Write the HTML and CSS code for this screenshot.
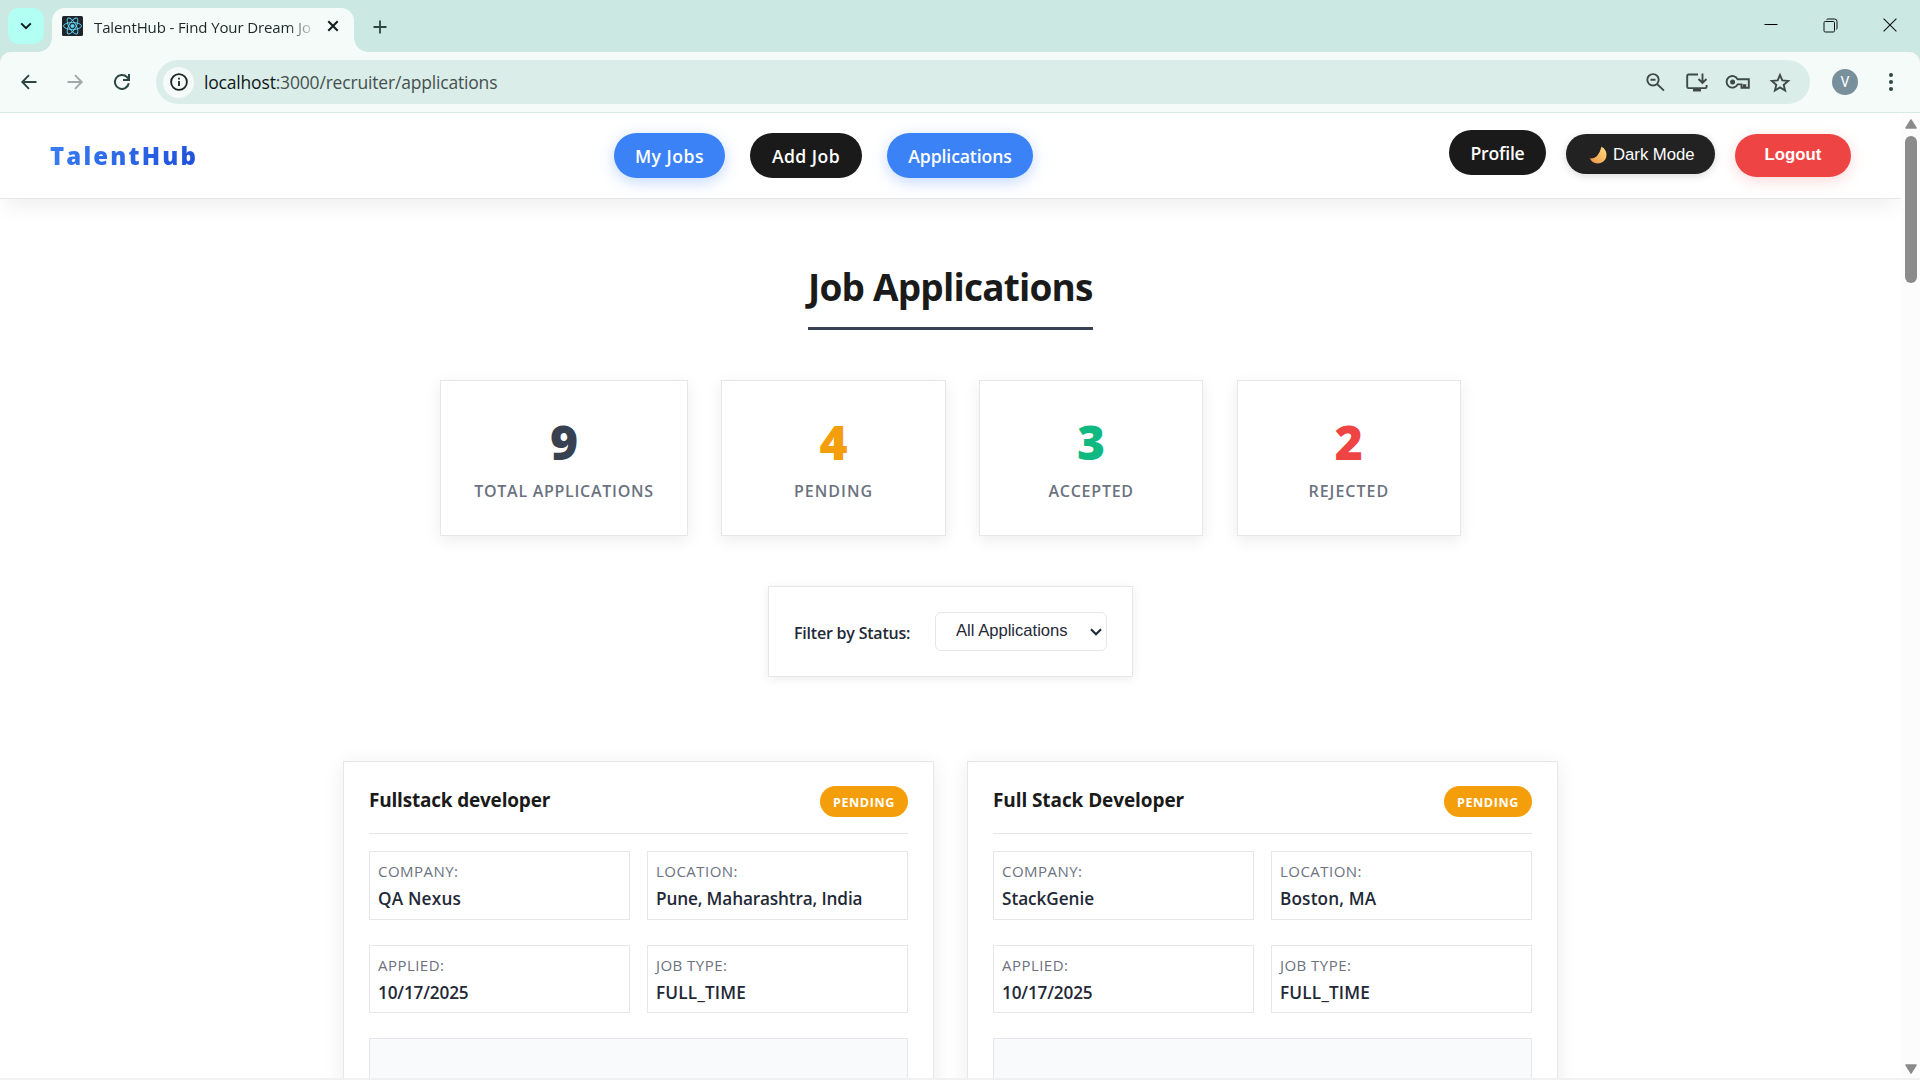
FILE: index.html
```html
<!DOCTYPE html>
<html lang="en">
<head>
<meta charset="utf-8">
<title>TalentHub - Find Your Dream Job</title>
<link rel="stylesheet" href="styles.css">
</head>
<body>
<div class="browser">
  <header class="tabstrip">
    <div class="tab-search"><svg width="12" height="8" viewBox="0 0 12 8"><path d="M1.2 1.4 6 6.2l4.8-4.8" fill="none" stroke="#101c1a" stroke-width="2"/></svg></div>
    <div class="tab">
      <svg class="favicon" width="21" height="20" viewBox="0 0 21 20"><rect width="21" height="20" rx="1.5" fill="#20232a"/><g fill="none" stroke="#61dafb" stroke-width=".9" transform="translate(10.5 10)"><ellipse rx="9" ry="3.5"/><ellipse rx="9" ry="3.5" transform="rotate(60)"/><ellipse rx="9" ry="3.5" transform="rotate(120)"/><circle r="1.6" fill="#61dafb"/></g></svg>
      <span class="tab-title">TalentHub - Find Your Dream Jo</span>
      <svg class="tab-close" width="12" height="12" viewBox="0 0 12 12"><path d="M1.3 1.3l9.4 9.4M10.7 1.3l-9.4 9.4" stroke="#101c1a" stroke-width="2"/></svg>
    </div>
    <svg class="new-tab" width="14" height="14" viewBox="0 0 14 14"><path d="M7 .5v13M.5 7h13" stroke="#2c4642" stroke-width="1.8"/></svg>
    <div class="window-controls">
      <svg width="14" height="14" viewBox="0 0 14 14"><path d="M.5 6.5h13" stroke="#000"/></svg>
      <svg width="15" height="15" viewBox="0 0 15 15"><g fill="none" stroke="#111"><rect x="1" y="3.5" width="10.5" height="10.5" rx="1.2"/><path d="M3.5 1.6Q4 1 5 1h6.500Q14 1 14 3.500v6.500q0 1-.6 1.500"/></g></svg>
      <svg width="14" height="14" viewBox="0 0 14 14"><path d="M.6.6l12.800 12.800M13.400.6.6 13.400" stroke="#111" stroke-width="1.100"/></svg>
    </div>
  </header>
  <div class="toolbar">
    <svg class="back" width="16" height="16" viewBox="0 0 16 16"><path d="M15.500 8H1.500M8 1.200 1.300 8 8 14.800" fill="none" stroke="#2c4642" stroke-width="1.900"/></svg>
    <svg class="forward" width="16" height="16" viewBox="0 0 16 16"><path d="M.5 8h14M8 1.200 14.700 8 8 14.800" fill="none" stroke="#a0a9a7" stroke-width="1.900"/></svg>
    <svg class="reload" width="16" height="16" viewBox="0 0 16 16"><path d="M14.800 9.300A7 7 0 1 1 12.900 3L15 5" fill="none" stroke="#2c4642" stroke-width="2"/><path d="M15 0v6H9" fill="none" stroke="#2c4642" stroke-width="2"/></svg>
    <div class="omnibox">
      <span class="site-info"><svg width="18" height="18" viewBox="0 0 18 18"><circle cx="9" cy="9" r="7.900" fill="none" stroke="#1b2422" stroke-width="1.800"/><path d="M9 8v5M9 4.800v1.800" stroke="#1b2422" stroke-width="1.800"/></svg></span>
      <span class="url"><b>localhost</b>:3000/recruiter/applications</span>
      <span class="actions">
        <svg class="zoom" width="19" height="18" viewBox="0 0 19 18"><g fill="none" stroke="#3f4a48" stroke-width="1.900"><circle cx="7" cy="6.800" r="5.700"/><path d="M4.500 6.800h5M11 11l7 6.600"/></g></svg>
        <svg class="install" width="22" height="19" viewBox="0 0 22 19"><g fill="none" stroke="#3f4a48" stroke-width="1.900"><path d="M12 1.500H2.500Q1.200 1.500 1.200 2.800v11q0 1.300 1.300 1.300h16.800q1.300 0 1.300-1.300V12M16.500.5v9M12.500 6l4 4 4-4"/></g><path d="M7 15h8v3.500H7z" fill="#3f4a48"/></svg>
        <svg width="24" height="14" viewBox="0 0 24 14"><path d="M11.600 4.300A5.800 5.800 0 1 0 11.600 9.400H15.500V12.800H17.800V10.200H19.300V12.800H22.800V4.300Z" fill="none" stroke="#3f4a48" stroke-width="1.900"/><circle cx="6.600" cy="7" r="2.500" fill="#3f4a48"/></svg>
        <svg width="20" height="19" viewBox="0 0 20 19"><path d="M10 2l2.300 5.400 5.900.5-4.500 3.900 1.400 5.700L10 14.400l-5.100 3.100 1.400-5.700L1.800 7.900l5.900-.5z" fill="none" stroke="#3f4a48" stroke-width="1.900"/></svg>
      </span>
    </div>
    <span class="avatar">V</span>
    <svg class="kebab" width="4" height="18" viewBox="0 0 4 18"><g fill="#2c4642"><circle cx="2" cy="2" r="2"/><circle cx="2" cy="9" r="2"/><circle cx="2" cy="16" r="2"/></g></svg>
  </div>
  <div class="viewport">
    <div class="page">
      <nav class="navbar">
        <span class="brand">TalentHub</span>
        <div class="menu">
          <a class="pill pill-blue pill-jobs">My Jobs</a>
          <a class="pill pill-black pill-add">Add Job</a>
          <a class="pill pill-blue pill-apps">Applications</a>
        </div>
        <div class="account">
          <a class="pill pill-black pill-profile">Profile</a>
          <button class="theme"><svg width="17" height="17" viewBox="0 0 18 18"><defs><linearGradient id="moon" x1="0" y1="1" x2="1" y2="0"><stop offset="0" stop-color="#e9904b"/><stop offset=".6" stop-color="#fbc065"/><stop offset="1" stop-color="#ffd98a"/></linearGradient></defs><path d="M13.200.8A9.300 9.300 0 1 1 .8 13.100Q9.800 14.200 13.200.8Z" fill="url(#moon)"/></svg><span>Dark Mode</span></button>
          <button class="logout">Logout</button>
        </div>
      </nav>
      <main class="content">
        <h1>Job Applications</h1>
        <section class="stats">
          <div class="stat"><strong class="total">9</strong><span class="stat-total">Total Applications</span></div>
          <div class="stat"><strong class="pending">4</strong><span>Pending</span></div>
          <div class="stat"><strong class="accepted">3</strong><span class="stat-accepted">Accepted</span></div>
          <div class="stat"><strong class="rejected">2</strong><span>Rejected</span></div>
        </section>
        <section class="filter">
          <label>Filter by Status:</label>
          <div class="select"><span>All Applications</span><svg width="12" height="8" viewBox="0 0 12 8"><path d="M1 1.200l5 5 5-5" fill="none" stroke="#1f2937" stroke-width="2.100"/></svg></div>
        </section>
        <section class="applications">
          <article class="card">
            <header><h2 class="tight">Fullstack developer</h2><span class="badge">Pending</span></header>
            <div class="details">
              <div><small>Company:</small><b class="wide">QA Nexus</b></div>
              <div><small>Location:</small><b class="place">Pune, Maharashtra, India</b></div>
              <div><small>Applied:</small><b class="date">10/17/2025</b></div>
              <div><small>Job Type:</small><b class="wide">FULL_TIME</b></div>
            </div>
            <div class="note"></div>
          </article>
          <article class="card">
            <header><h2>Full Stack Developer</h2><span class="badge">Pending</span></header>
            <div class="details">
              <div><small>Company:</small><b>StackGenie</b></div>
              <div><small>Location:</small><b class="city">Boston, MA</b></div>
              <div><small>Applied:</small><b class="date">10/17/2025</b></div>
              <div><small>Job Type:</small><b class="wide">FULL_TIME</b></div>
            </div>
            <div class="note"></div>
          </article>
        </section>
      </main>
    </div>
    <div class="scrollbar">
      <svg width="12" height="10" viewBox="0 0 12 10"><path d="M6 1l5 8H1z" fill="#8b8b8b" stroke="#8b8b8b" stroke-width="1.500" stroke-linejoin="round"/></svg>
      <i></i>
      <svg class="down" width="12" height="10" viewBox="0 0 12 10"><path d="M6 9l5-8H1z" fill="#8b8b8b" stroke="#8b8b8b" stroke-width="1.500" stroke-linejoin="round"/></svg>
    </div>
  </div>
  <footer class="window-edge"></footer>
</div>
</body>
</html>
```
FILE: styles.css
```css
* { box-sizing: border-box; }
body { margin: 0; font-family: "Open Sans", "Noto Sans", sans-serif; color: #1f2937; background: #fff; }
svg { display: block; flex: none; overflow: visible; }
.browser { width: 1920px; height: 1080px; display: flex; flex-direction: column; overflow: hidden; background: linear-gradient(#cce8e2 80px, #fff 80px); }

/* Tab strip */
.tabstrip { height: 52px; display: flex; align-items: flex-start; padding: 8px 23px 0 8px; background: #cce8e2; }
.tab-search { width: 36px; height: 36px; border-radius: 11px; background: #b2fff3; display: grid; place-items: center; margin-right: 8px; }
.tab { position: relative; width: 302px; height: 44px; background: #f4fbf9; border-radius: 13px 13px 0 0; display: flex; align-items: center; padding: 0 15px 8px 10px; }
.tab::before, .tab::after { content: ""; position: absolute; bottom: 0; width: 14px; height: 14px; }
.tab::before { left: -14px; background: radial-gradient(circle at 0 0, transparent 13.5px, #f4fbf9 14px); }
.tab::after { right: -14px; background: radial-gradient(circle at 100% 0, transparent 13.5px, #f4fbf9 14px); }
.tab-title { margin-left: 11px; white-space: nowrap; font-size: 15px; line-height: 24px; letter-spacing: -.12px; color: #1c2826; padding-top: 1px; -webkit-mask-image: linear-gradient(90deg, #000 193px, transparent 223px); mask-image: linear-gradient(90deg, #000 193px, transparent 223px); }
.tab-close { margin-left: auto; }
.new-tab { margin: 12px 0 0 19px; }
.window-controls { margin: 10px 0 0 auto; display: flex; gap: 45px; }
.toolbar { height: 61px; flex: none; display: flex; align-items: center; background: #f4fbf9; border-bottom: 1px solid #d8e8e4; border-radius: 11px 11px 0 0; padding: 0 27px 0 21px; }
.forward { margin-left: 30px; }
.reload { margin-left: 31px; }
.omnibox { width: 1654px; height: 44px; border-radius: 22px; margin-left: 26px; background: #daede9; display: flex; align-items: center; padding: 0 20px 0 7px; }
.site-info { width: 31px; height: 31px; border-radius: 50%; background: #f4fbf9; display: grid; place-items: center; }
.url { margin-left: 10px; font-size: 17.5px; letter-spacing: -.18px; color: #46504e; line-height: 26px; }
.url b { font-weight: 400; color: #101817; }
.actions { margin-left: auto; display: flex; align-items: center; gap: 20px; }
.zoom { margin-right: 1px; }
.install { margin-right: -2px; }
.avatar { width: 26px; height: 26px; border-radius: 50%; margin-left: 22px; background: #78909c; color: #fff; font: 14px/26px Roboto, sans-serif; text-align: center; }
.kebab { margin-left: auto; }

/* Page and scrollbar */
.viewport { flex: 1; min-height: 0; display: flex; background: #fff; }
.page { width: 1901px; overflow: hidden; }
.scrollbar { width: 19px; background: #fcfcfc; display: flex; flex-direction: column; align-items: center; padding: 6px 0 4px; }
.scrollbar i { width: 12px; height: 147px; border-radius: 6px; background: #8b8b8b; margin-top: 7px; }
.scrollbar .down { margin-top: auto; }
.window-edge { height: 2px; background: #f1f1f1; }

/* Navigation */
.navbar { position: relative; height: 86px; display: flex; align-items: center; justify-content: space-between; padding: 0 50px; border-bottom: 1px solid #e5e7eb; box-shadow: 0 10px 25px -5px rgba(0,0,0,.08); background: #fff; }
.brand { width: 147px; font-size: 24px; font-weight: 800; letter-spacing: 2.15px; line-height: 36px; padding-top: 1px; color: transparent; background: linear-gradient(135deg, #3b82f6, #1d4ed8); -webkit-background-clip: text; background-clip: text; }
.menu { display: flex; gap: 25px; }
.pill { display: block; height: 45px; border-radius: 23px; color: #fff; font-size: 17.6px; font-weight: 600; line-height: 46px; text-align: center; white-space: nowrap; }
.pill-blue { background: #3b82f6; box-shadow: 0 4px 15px rgba(59,130,246,.3); }
.pill-black { background: #1a1a1a; }
.pill-jobs { width: 111px; letter-spacing: .5px; padding-left: 1px; }
.pill-add { width: 112px; letter-spacing: .45px; padding-left: 1px; }
.pill-apps { width: 146px; letter-spacing: -.1px; padding-left: 1px; }
.pill-profile { width: 97px; letter-spacing: -.2px; }
.account { display: flex; align-items: flex-start; height: 51px; }
button { border: 0; color: #fff; font-family: "Liberation Sans", Arial, sans-serif; padding: 0; }
.theme { width: 149px; height: 40px; margin: 4px 20px 0; border-radius: 20px; background: #222; box-shadow: 0 2px 8px rgba(0,0,0,.15); display: flex; align-items: center; padding-left: 23px; gap: 7px; font-size: 16.7px; }
.theme span { padding-top: 1px; }
.logout { width: 116px; height: 43px; margin-top: 4px; border-radius: 22px; background: #ef4444; box-shadow: 0 4px 15px rgba(239,68,68,.2); font-size: 16.8px; font-weight: 700; padding-bottom: 2px; }

/* Heading */
.content { display: flex; flex-direction: column; align-items: center; padding-top: 63px; }
h1 { margin: 0; width: 285px; height: 68px; border-bottom: 3px solid #374151; color: #1a1a1a; font-size: 37px; line-height: 50px; letter-spacing: -.8px; white-space: nowrap; }

/* Statistics */
.stats { width: 1021px; display: grid; grid-template-columns: 248px repeat(3, 224.3px); justify-content: space-between; margin-top: 50px; }
.stat { height: 156px; border: 1px solid #e5e7eb; background: #fff; box-shadow: 0 4px 15px rgba(0,0,0,.08); display: flex; flex-direction: column; align-items: center; }
.stat strong { font-size: 48px; font-weight: 800; line-height: 50px; margin-top: 36px; }
.stat span { font-size: 16px; font-weight: 600; line-height: 22px; letter-spacing: 1px; margin-top: 13px; text-transform: uppercase; color: #6b7280; }
.stat .stat-total { letter-spacing: .72px; }
.stat .stat-accepted { letter-spacing: .75px; }
.total { color: #374151; }
.pending { color: #f59e0b; }
.accepted { color: #10b981; }
.rejected { color: #ef4444; }

/* Filter */
.filter { width: 365px; height: 91px; margin-top: 50px; border: 1px solid #e5e7eb; box-shadow: 0 2px 10px rgba(0,0,0,.08); display: flex; align-items: center; padding: 0 25px; }
.filter label { width: 141px; font-size: 16px; font-weight: 600; letter-spacing: -.21px; line-height: 24px; padding-top: 2px; }
.select { width: 172px; height: 39px; border: 1px solid #e5e7eb; border-radius: 6px; display: flex; align-items: center; justify-content: space-between; padding: 0 4px 0 20px; font: 16.6px/20px "Liberation Sans", Arial, sans-serif; }
.select span { padding-bottom: 2px; }

/* Application cards */
.applications { display: flex; gap: 33px; margin-top: 84px; }
.card { width: 591px; height: 500px; border: 1px solid #e5e7eb; background: #fff; box-shadow: 0 4px 20px rgba(0,0,0,.08); padding: 24px 25px; }
.card header { height: 48px; display: flex; justify-content: space-between; align-items: flex-start; border-bottom: 1px solid #e5e7eb; }
h2 { margin: 0; font-size: 19px; line-height: 28px; letter-spacing: -.09px; color: #1a1a1a; }
h2.tight { letter-spacing: -.2px; }
.badge { width: 88px; height: 31px; border-radius: 15.5px; background: #f59e0b; color: #fff; font-size: 12.5px; font-weight: 700; line-height: 33px; letter-spacing: .65px; text-align: center; text-transform: uppercase; }
.details { display: grid; grid-template-columns: 261px 261px; grid-template-rows: 69px 68px; justify-content: space-between; row-gap: 25px; margin-top: 17px; }
.details > div { border: 1px solid #e5e7eb; padding: 8px; display: flex; flex-direction: column; }
.details small { font-size: 15px; font-weight: 500; line-height: 22px; letter-spacing: .46px; text-transform: uppercase; color: #6b7280; }
.details b { font-size: 17.2px; font-weight: 600; line-height: 26px; margin-top: 4px; letter-spacing: -.06px; }
.details b.wide { letter-spacing: .2px; }
.details b.date { letter-spacing: -.15px; }
.details b.city { letter-spacing: .15px; }
.details b.place { letter-spacing: -.14px; }
.note { height: 200px; margin-top: 25px; border: 1px solid #e5e7eb; background: #f9fafb; }
```
